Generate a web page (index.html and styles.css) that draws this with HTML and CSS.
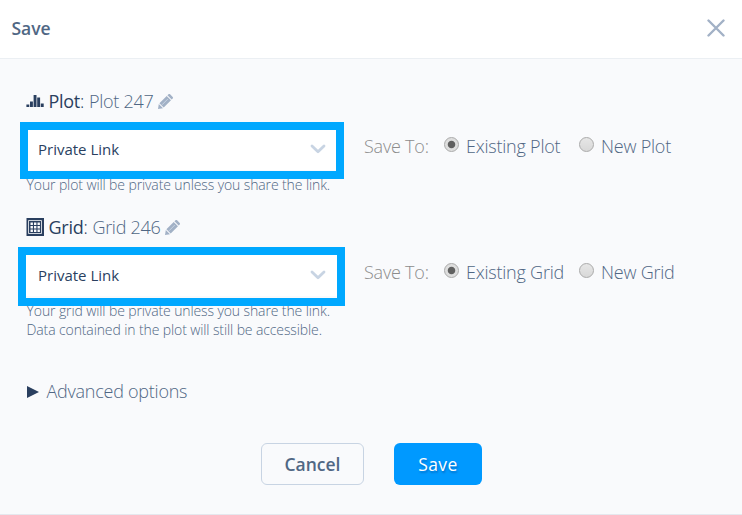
FILE: index.html
```html
<!DOCTYPE html>
<html lang="en">
<head>
<meta charset="utf-8">
<title>Save</title>
<link rel="stylesheet" href="styles.css">
</head>
<body>
<div class="dialog">
  <header class="header">
    <h1 class="title">Save</h1>
    <svg class="close" width="18" height="18" viewBox="0 0 18 18"><path d="M1.5 1.5 16.5 16.5M16.5 1.5 1.5 16.5"/></svg>
  </header>
  <main class="body">
    <section class="file">
      <div class="name">
        <svg class="icon" width="18" height="18" viewBox="0 0 18 18"><path d="M.4 12.500h2.900V15H.4zM4 9.500h2.900V15H4zM7.600 6.500h0V15h0zM7.600 3h2.900v12H7.600zM11.200 5.500h2.900V15h-2.900zM14.800 11.500h2.900V15h-2.900z"/></svg>
        <span class="kind"><b>Plot</b>:</span><span class="label">Plot 247</span>
        <svg class="pencil" width="15" height="15" viewBox="0 0 15 15"><path d="M0 15 .8 10 5 14.200zM1.400 9.300 8.700 2 13 6.300 5.700 13.600zM9.400 1.300 10.500.3q.8-.7 1.600 0L14.700 2.900q.7.8 0 1.600L13.700 5.600z"/><path class="groove" d="M4 10.800 9.800 5"/></svg>
      </div>
      <div class="row">
        <div class="select"><span>Private Link</span><svg class="chevron" width="16" height="10" viewBox="0 0 16 10"><path d="M2 2 8 7.800 14 2"/></svg><i class="frame frame-plot"></i></div>
        <div class="saveto"><span class="hint">Save To:</span><i class="radio on"></i><span class="existing">Existing Plot</span><i class="radio"></i><span class="new">New Plot</span></div>
      </div>
      <p class="note"><span>Your plot will be private unless you share the link.</span></p>
    </section>
    <section class="file">
      <div class="name">
        <svg class="icon" width="18" height="18" viewBox="0 0 18 18"><path d="M.5 0H18v18H.5z"/><path class="ring" d="M2.500 2.500h13v13h-13z"/><path class="cells" d="M4.500 4.500h2.400v2.400H4.500zM8 4.500h2.400v2.400H8zM11.500 4.500h2.400v2.400h-2.400zM4.500 8h2.400v2.400H4.500zM8 8h2.400v2.400H8zM11.500 8h2.400v2.400h-2.400zM4.500 11.500h2.400v2.400H4.500zM8 11.500h2.400v2.400H8zM11.500 11.500h2.400v2.400h-2.400z"/></svg>
        <span class="kind"><b>Grid</b>:</span><span class="label">Grid 246</span>
        <svg class="pencil" width="15" height="15" viewBox="0 0 15 15"><path d="M0 15 .8 10 5 14.200zM1.400 9.300 8.700 2 13 6.300 5.700 13.600zM9.400 1.300 10.500.3q.8-.7 1.600 0L14.700 2.900q.7.8 0 1.600L13.700 5.600z"/><path class="groove" d="M4 10.800 9.800 5"/></svg>
      </div>
      <div class="row">
        <div class="select"><span>Private Link</span><svg class="chevron" width="16" height="10" viewBox="0 0 16 10"><path d="M2 2 8 7.800 14 2"/></svg><i class="frame frame-grid"></i></div>
        <div class="saveto"><span class="hint">Save To:</span><i class="radio on"></i><span class="existing">Existing Grid</span><i class="radio"></i><span class="new">New Grid</span></div>
      </div>
      <p class="note"><span>Your grid will be private unless you share the link.</span><br><span>Data contained in the plot will still be accessible.</span></p>
    </section>
    <div class="advanced"><svg class="arrow" width="12" height="12" viewBox="0 0 12 12"><path d="M0 0 12 6 0 12z"/></svg><span>Advanced options</span></div>
    <footer class="actions"><button class="btn cancel">Cancel</button><button class="btn save">Save</button></footer>
  </main>
</div>
</body>
</html>
```

FILE: styles.css
```css
* { box-sizing: border-box; }
body { margin: 0; background: #f9fafc; font-family: "Open Sans", sans-serif; color: #506784; }
.dialog { height: 515px; display: flex; flex-direction: column; border-bottom: 1px solid #e5e8ee; }
.header { height: 59px; display: flex; justify-content: space-between; align-items: center; padding: 0 17px 2px 11.5px; background: #fff; border-bottom: 1px solid #ebeff3; }
.title { margin: 0; font-size: 17.5px; line-height: 24px; font-weight: 600; }
.close { fill: none; stroke: #a2b1c6; stroke-width: 2.4; stroke-linecap: round; }
.body { flex: 1; padding: 31px 26px 0; }
.file { height: 126px; white-space: nowrap; }
.name { display: flex; align-items: center; height: 22px; font-size: 18px; font-weight: 300; line-height: 22px; letter-spacing: -0.28px; }
.icon { fill: #2a3f5f; margin-right: 4.500px; flex: none; }
.ring { fill: none; stroke: #f9fafc; stroke-width: .8; }
.cells { fill: #f9fafc; }
.kind { color: #2a3f5f; margin-right: 5px; }
.kind b { font-weight: 400; }
.pencil { fill: #a2b1c6; margin-left: 5px; }
.groove { fill: none; stroke: #c8d4e3; stroke-width: 1; }
.row { display: flex; margin-top: 16px; }
.select { position: relative; display: flex; align-items: center; justify-content: space-between; width: 312px; height: 42px; padding: 0 12px; background: #fff; font-size: 15px; color: #2a3f5f; }
.chevron { fill: none; stroke: #c8d4e3; stroke-width: 2.8; stroke-linecap: round; stroke-linejoin: round; }
.frame { position: absolute; border: 8px solid #00a8ff; }
.frame-plot { left: -6px; top: -6px; width: 324px; height: 57px; }
.frame-grid { left: -8px; top: -7px; width: 327px; height: 59px; }
.saveto { display: flex; align-items: center; height: 34px; margin: 1px 0 0 26px; font-size: 18px; font-weight: 300; letter-spacing: -0.22px; }
.hint { width: 80px; color: #8c8c8c; }
.radio { width: 15px; height: 15px; margin: -3px 7px 0 0; border: 1px solid #aaa; border-radius: 50%; background: linear-gradient(#e6e6e6, #d8d8d8); flex: none; }
.radio.on { background: radial-gradient(circle, #606060 0 3.300px, #dedede 4.200px); }
.existing { width: 113px; }
.note { margin: 5px 0 0 .5px; font-size: 14px; font-weight: 300; line-height: 19px; letter-spacing: -0.11px; }
.advanced { display: flex; align-items: center; height: 22px; margin-top: 38px; font-size: 18px; font-weight: 300; letter-spacing: -0.25px; }
.arrow { fill: #2a3f5f; margin: 2px 7.500px 0 1px; }
.actions { display: flex; margin: 41px 0 0 235px; gap: 30px; }
.btn { height: 42px; padding: 0; border-radius: 6px; font: 600 17.5px "Open Sans", sans-serif; }
.cancel { width: 103px; background: #f9fafc; border: 1px solid #c8d4e3; color: #506784; }
.save { width: 88px; border: 0; background: #0099ff; color: #fff; font-weight: 500; letter-spacing: .35px; text-shadow: 1px 2px 2px rgba(0, 60, 130, .4); }
```
